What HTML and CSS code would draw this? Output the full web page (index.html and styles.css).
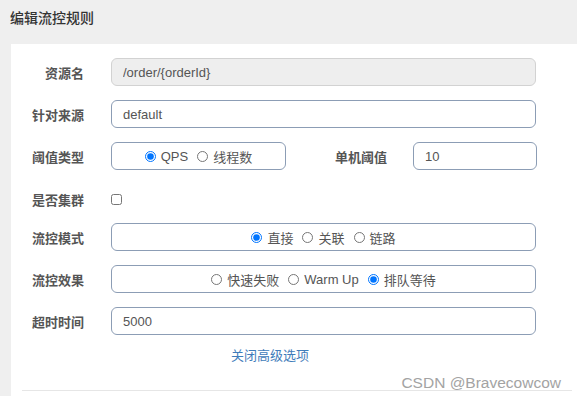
FILE: index.html
```html
<!DOCTYPE html>
<html>
<head>
    <title>编辑流控规则</title>
    <link rel="stylesheet" href="styles.css">
</head>
<body>
    <div class="header">编辑流控规则</div>
    <div class="panel">
        <div class="row">
            <label class="label">资源名</label>
            <input class="field wide" type="text" value="/order/{orderId}" disabled>
        </div>
        <div class="row">
            <label class="label">针对来源</label>
            <input class="field wide" type="text" value="default">
        </div>
        <div class="row">
            <label class="label">阈值类型</label>
            <div class="group narrow">
                <label class="opt"><input type="radio" name="grade" checked>QPS</label>
                <label class="opt"><input type="radio" name="grade">线程数</label>
            </div>
            <label class="label label-2">单机阈值</label>
            <input class="field small" type="text" value="10">
        </div>
        <div class="row row-check">
            <label class="label">是否集群</label>
            <input class="check" type="checkbox">
        </div>
        <div class="row">
            <label class="label">流控模式</label>
            <div class="group wide">
                <label class="opt"><input type="radio" name="mode" checked>直接</label>
                <label class="opt"><input type="radio" name="mode">关联</label>
                <label class="opt"><input type="radio" name="mode">链路</label>
            </div>
        </div>
        <div class="row">
            <label class="label">流控效果</label>
            <div class="group wide">
                <label class="opt"><input type="radio" name="effect">快速失败</label>
                <label class="opt"><input type="radio" name="effect">Warm Up</label>
                <label class="opt"><input type="radio" name="effect" checked>排队等待</label>
            </div>
        </div>
        <div class="row">
            <label class="label">超时时间</label>
            <input class="field wide" type="text" value="5000">
        </div>
        <div class="more"><a href="#">关闭高级选项</a></div>
        <div class="footer">
            <span class="watermark">CSDN @Bravecowcow</span>
        </div>
    </div>
</body>
</html>
```

FILE: styles.css
```css
body {
    font-family: "Liberation Sans", "Noto Sans CJK SC", sans-serif;
    margin: 0;
    padding: 0;
    background: #efefef;
    color: #555;
    font-size: 13px;
    overflow: hidden;
}
.header {
    height: 44px;
    line-height: 36px;
    padding-left: 10px;
    font-size: 14px;
    font-weight: 500;
    color: #333;
}
.panel {
    margin-left: 11px;
    padding-top: 14px;
    background: #fff;
    height: 340px;
    position: relative;
}
.row {
    display: flex;
    align-items: center;
    height: 28px;
    margin-bottom: 14px;
}
.row-check {
    height: 30px;
    margin-bottom: 9px;
}
.label {
    width: 73px;
    margin-right: 27px;
    text-align: right;
    font-weight: bold;
    color: #555;
    white-space: nowrap;
}
.label-2 {
    width: 101px;
    margin-right: 26px;
}
.field {
    box-sizing: border-box;
    height: 28px;
    padding: 0 11px;
    border: 1px solid #8c9db5;
    border-radius: 6px;
    font-family: inherit;
    font-size: 13px;
    color: #555;
    background: #fff;
    outline: none;
}
.field:disabled {
    background: #eee;
    border-color: #d2d2d2;
    color: #555;
}
.wide {
    width: 425px;
}
.narrow {
    width: 175px;
}
.small {
    width: 124px;
}
.group {
    box-sizing: border-box;
    height: 28px;
    border: 1px solid #8c9db5;
    border-radius: 6px;
    display: flex;
    align-items: center;
    justify-content: center;
    gap: 9px;
}
.opt {
    display: flex;
    align-items: center;
    color: #555;
}
.opt input {
    width: 11px;
    height: 11px;
    margin: 0 5px 0 0;
}
.check {
    width: 11px;
    height: 11px;
    margin: 0;
}
.more {
    width: 518px;
    height: 24px;
    line-height: 24px;
    margin-top: -5px;
    text-align: center;
}
.more a {
    color: #3f7cba;
    text-decoration: none;
}
.footer {
    margin-top: 22px;
    margin-left: 11px;
    width: 550px;
    border-top: 1px solid #e6e6e6;
    position: relative;
}
.watermark {
    position: absolute;
    right: 11px;
    top: -17px;
    font-size: 15.5px;
    color: #a3a3a3;
    white-space: nowrap;
}
```
